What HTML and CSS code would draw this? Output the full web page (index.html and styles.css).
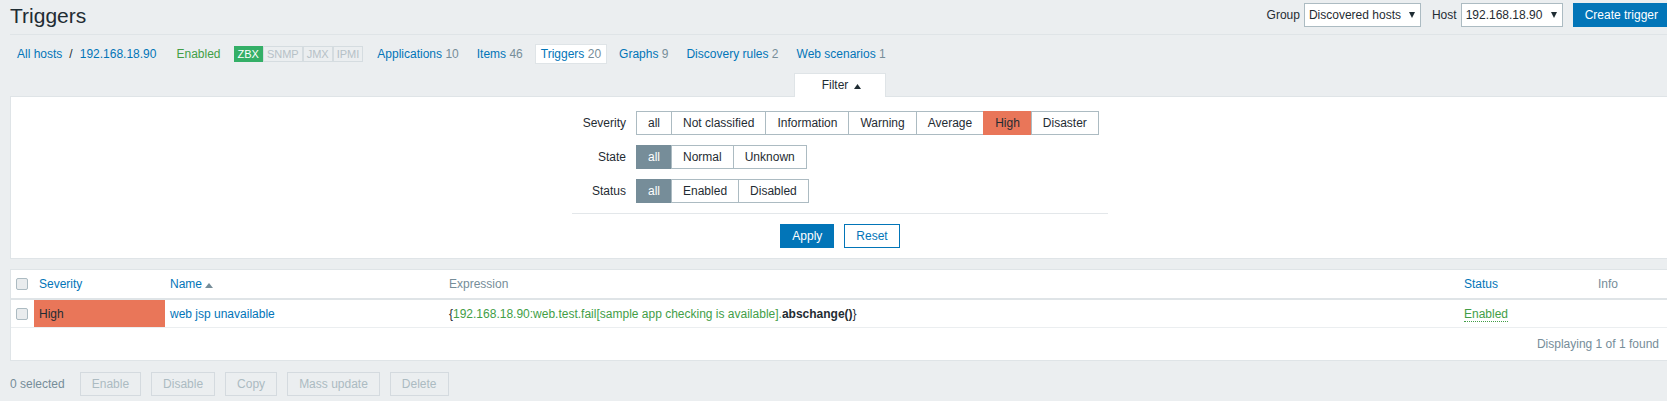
FILE: index.html
```html
<!DOCTYPE html>
<html lang="en">
<head>
<meta charset="utf-8">
<title>Triggers</title>
<link rel="stylesheet" href="styles.css">
</head>
<body>
<div class="page">
  <header class="header">
    <h1 class="title">Triggers</h1>
    <div class="controls">
      <span class="ctl-label">Group</span>
      <div class="select select-group"><span>Discovered hosts</span><svg class="sel-arrow" width="6" height="6" viewBox="0 0 6 6"><path d="M0 0H6L3 6Z" fill="#1f2c33"/></svg></div>
      <span class="ctl-label ctl-host">Host</span>
      <div class="select select-host"><span>192.168.18.90</span><svg class="sel-arrow" width="6" height="6" viewBox="0 0 6 6"><path d="M0 0H6L3 6Z" fill="#1f2c33"/></svg></div>
      <button class="btn btn-primary btn-create">Create trigger</button>
    </div>
  </header>

  <nav class="host-nav">
    <div class="crumbs"><a class="link">All hosts</a><span class="crumb-sep">/</span><a class="link">192.168.18.90</a></div>
    <span class="nav-enabled">Enabled</span>
    <div class="badges">
      <span class="badge badge-on">ZBX</span><span class="badge badge-off">SNMP</span><span class="badge badge-off">JMX</span><span class="badge badge-off">IPMI</span>
    </div>
    <ul class="tabs">
      <li><a class="link">Applications</a> <span class="count">10</span></li>
      <li><a class="link">Items</a> <span class="count">46</span></li>
      <li class="selected"><a class="link">Triggers</a> <span class="count">20</span></li>
      <li><a class="link">Graphs</a> <span class="count">9</span></li>
      <li><a class="link">Discovery rules</a> <span class="count">2</span></li>
      <li><a class="link">Web scenarios</a> <span class="count">1</span></li>
    </ul>
  </nav>

  <div class="filter-tabs">
    <div class="filter-tab">Filter<svg class="tab-arrow" width="7" height="5" viewBox="0 0 7 5"><path d="M0 5H7L3.5 0Z" fill="#1f2c33"/></svg></div>
  </div>
  <section class="filter-panel">
    <div class="filter-form">
      <div class="form-row">
        <div class="form-label">Severity</div>
        <div class="radio-list">
          <span class="opt">all</span><span class="opt">Not classified</span><span class="opt">Information</span><span class="opt">Warning</span><span class="opt">Average</span><span class="opt opt-high">High</span><span class="opt">Disaster</span>
        </div>
      </div>
      <div class="form-row">
        <div class="form-label">State</div>
        <div class="radio-list">
          <span class="opt opt-on">all</span><span class="opt">Normal</span><span class="opt">Unknown</span>
        </div>
      </div>
      <div class="form-row">
        <div class="form-label">Status</div>
        <div class="radio-list">
          <span class="opt opt-on">all</span><span class="opt">Enabled</span><span class="opt">Disabled</span>
        </div>
      </div>
      <div class="form-sep"></div>
      <div class="form-actions">
        <button class="btn btn-primary">Apply</button>
        <button class="btn btn-alt">Reset</button>
      </div>
    </div>
  </section>

  <section class="list">
    <table class="list-table">
      <colgroup>
        <col class="c-cb"><col class="c-sev"><col class="c-name"><col class="c-expr"><col class="c-status"><col class="c-info">
      </colgroup>
      <thead>
        <tr>
          <th class="cell-cb"><span class="cb"></span></th>
          <th><a class="link">Severity</a></th>
          <th><a class="link">Name</a> <svg class="sort-arrow" width="8" height="5" viewBox="0 0 8 5"><path d="M0 5H8L4 0Z" fill="#768d99"/></svg></th>
          <th class="muted">Expression</th>
          <th><a class="link">Status</a></th>
          <th class="muted">Info</th>
        </tr>
      </thead>
      <tbody>
        <tr>
          <td class="cell-cb"><span class="cb"></span></td>
          <td class="sev-high">High</td>
          <td><a class="link">web jsp unavailable</a></td>
          <td>{<span class="green">192.168.18.90:web.test.fail[sample app checking is available].</span><b>abschange()</b>}</td>
          <td><a class="status-link">Enabled</a></td>
          <td></td>
        </tr>
      </tbody>
    </table>
    <div class="paging">Displaying 1 of 1 found</div>
  </section>

  <div class="action-buttons">
    <span class="selected-count">0 selected</span>
    <button class="btn btn-disabled">Enable</button>
    <button class="btn btn-disabled">Disable</button>
    <button class="btn btn-disabled">Copy</button>
    <button class="btn btn-disabled">Mass update</button>
    <button class="btn btn-disabled">Delete</button>
  </div>
</div>
</body>
</html>
```

FILE: styles.css
```css
html {
  overflow: hidden;
  background: #ebeef0;
}

body {
  margin: 0;
  font: 12px/14px "Liberation Sans", Arial, sans-serif;
  color: #1f2c33;
  background: #ebeef0;
}

.page {
  width: 1660px;
  margin: 0 10px;
}

.link {
  color: #0275b8;
  text-decoration: none;
}

.green {
  color: #429e47;
}

.muted {
  color: #768d99;
}

/* header */
.header {
  display: flex;
  justify-content: space-between;
  align-items: flex-start;
  padding-top: 3px;
  height: 31px;
  border-bottom: 1px solid #dfe4e7;
}

.title {
  margin: 1px 0 0;
  font-size: 21px;
  line-height: 24px;
  font-weight: normal;
  color: #1f2c33;
}

.controls {
  display: flex;
  align-items: center;
  height: 24px;
}

.ctl-label {
  margin-right: 4px;
}

.ctl-host {
  margin-left: 11px;
}

.select {
  display: flex;
  align-items: center;
  justify-content: space-between;
  box-sizing: border-box;
  height: 24px;
  padding: 0 5px 0 4px;
  border: 1px solid #acbbc2;
  background: #fff;
}

.select-group {
  width: 117px;
}

.select-host {
  width: 102px;
}

.btn {
  font: inherit;
  line-height: 22px;
  height: 24px;
  box-sizing: border-box;
  padding: 0 11px;
  border: 1px solid;
  border-radius: 0;
  margin: 0;
}

.btn-primary {
  background: #0275b8;
  border-color: #0275b8;
  color: #fff;
}

.btn-alt {
  background: #fff;
  border-color: #0275b8;
  color: #0275b8;
}

.btn-create {
  margin-left: 10px;
}

/* host navigation */
.host-nav {
  display: flex;
  align-items: center;
  margin-top: 9px;
  height: 20px;
}

.crumbs {
  margin-left: 7px;
}

.crumb-sep {
  margin: 0 7px;
}

.nav-enabled {
  margin-left: 20px;
  color: #429e47;
}

.badges {
  display: flex;
  margin-left: 13px;
}

.badge {
  font-size: 11px;
  line-height: 14px;
  padding: 0 3px;
  border: 1px solid;
}

.badge-on {
  background: #34af67;
  border-color: #34af67;
  color: #fff;
}

.badge-off {
  background: #ebeef0;
  border-color: #d5dce0;
  color: #b6c1c7;
}

.tabs {
  display: flex;
  list-style: none;
  margin: 0 0 0 8px;
  padding: 0;
  gap: 6px;
}

.tabs li {
  padding: 0 5px;
  line-height: 18px;
  border: 1px solid transparent;
}

.tabs li.selected {
  background: #fff;
  border-color: #dfe4e7;
}

.count {
  color: #768d99;
}

/* filter */
.filter-tabs {
  display: flex;
  justify-content: center;
  margin-top: 9px;
}

.filter-tab {
  position: relative;
  z-index: 1;
  height: 24px;
  line-height: 22px;
  box-sizing: border-box;
  padding: 0 24px 0 27px;
  background: #fff;
  border: 1px solid #dfe4e7;
  border-bottom: none;
  margin-bottom: -1px;
}

.tab-arrow {
  margin-left: 6px;
  vertical-align: 0;
}

.filter-panel {
  background: #fff;
  border: 1px solid #dfe4e7;
  padding: 14px 0 10px;
}

.filter-form {
  width: 536px;
  margin: 0 auto;
}

.form-row {
  display: flex;
  align-items: center;
  margin-bottom: 10px;
}

.form-label {
  width: 54px;
  padding-right: 10px;
  text-align: right;
}

.radio-list {
  display: flex;
}

.opt {
  height: 24px;
  box-sizing: border-box;
  line-height: 22px;
  padding: 0 11px;
  border: 1px solid #acbbc2;
  background: #fff;
  margin-left: -1px;
}

.opt:first-child {
  margin-left: 0;
}

.opt-on {
  background: #768d99;
  border-color: #768d99;
  color: #fff;
}

.opt-high {
  background: #e97659;
  border-color: #e97659;
}

.form-sep {
  height: 1px;
  background: #e3e7ea;
}

.form-actions {
  display: flex;
  justify-content: center;
  gap: 10px;
  margin-top: 10px;
}

/* list */
.list {
  margin-top: 10px;
  background: #fff;
  border: 1px solid #dfe4e7;
}

.list-table {
  width: 100%;
  border-collapse: separate;
  border-spacing: 0;
  table-layout: fixed;
}

.c-cb { width: 23px; }
.c-sev { width: 131px; }
.c-name { width: 279px; }
.c-expr { width: 1015px; }
.c-status { width: 134px; }
.c-info { width: 76px; }

.list-table th {
  padding: 7px 5px;
  text-align: left;
  font-weight: normal;
  border-bottom: 2px solid #dfe4e7;
  white-space: nowrap;
}

.list-table td {
  padding: 7px 5px 6px;
  border-bottom: 1px solid #ebeef0;
  white-space: nowrap;
}

.list-table .cell-cb {
  padding-right: 0;
}

.cb {
  display: block;
  width: 12px;
  height: 12px;
  box-sizing: border-box;
  margin: 1px 0;
  border: 1px solid #acbbc2;
  border-radius: 2px;
  background: #e9ecee;
}

.sort-arrow {
  vertical-align: 0;
}

.list-table td.sev-high {
  background: #e97659;
}

.list-table b {
  font-weight: bold;
}

.status-link {
  color: #429e47;
  text-decoration: none;
  border-bottom: 1px dotted #429e47;
}

.paging {
  height: 32px;
  line-height: 32px;
  text-align: right;
  padding-right: 10px;
  color: #768d99;
}

/* action buttons */
.action-buttons {
  display: flex;
  align-items: center;
  margin-top: 11px;
}

.selected-count {
  color: #768d99;
  margin-right: 15px;
}

.btn-disabled {
  background: #ebeef0;
  border-color: #d4dadf;
  color: #acbbc2;
  margin-right: 10px;
}
```
